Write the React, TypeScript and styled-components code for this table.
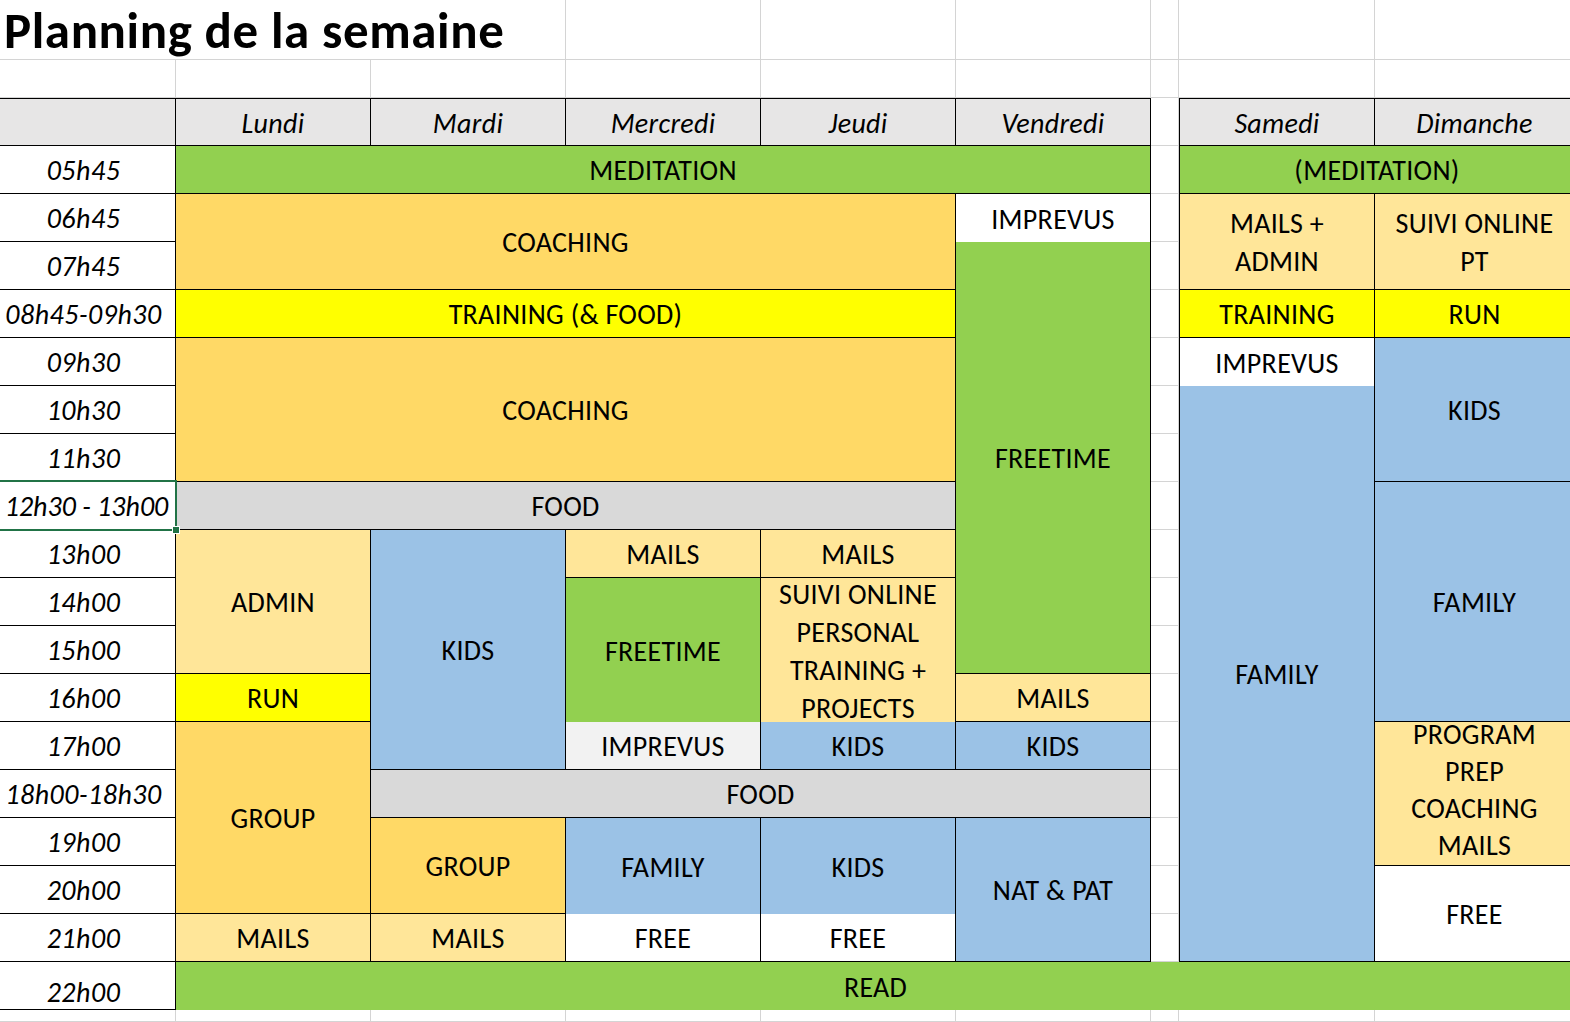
import React from 'react';
import styled, { createGlobalStyle, css } from 'styled-components';

const FONT = `Carlito, Calibri, Lato, "Liberation Sans", sans-serif`;

const Global = createGlobalStyle`
  html, body { margin: 0; padding: 0; background: #fff; overflow: hidden; }
  body { font-family: ${FONT}; color: #000; }
`;

const C = {
  green: '#92D050',
  gold: '#FFD966',
  light: '#FFE699',
  blue: '#9BC2E6',
  yellow: '#FFFF00',
  gray: '#D9D9D9',
  head: '#E7E6E6',
  pale: '#F2F2F2',
  white: '#FFFFFF',
};

const GRID = '#D4D4D4';

const Sheet = styled.div`
  display: grid;
  grid-template-columns: 176px repeat(5, 195px) 28px 196px 200px;
  grid-template-rows: 60px 38px 48px repeat(18, 48px) 12px;
  width: 1570px;
  height: 1022px;
  overflow: hidden;
  font-size: 28px;
  letter-spacing: 0.3px;
`;

const GridCell = styled.div<{ $r: number; $c: number }>`
  grid-row: ${(p) => p.$r};
  grid-column: ${(p) => p.$c};
  border-right: 1px solid ${GRID};
  border-bottom: 1px solid ${GRID};
  background: #fff;
`;

const Title = styled.h1`
  grid-row: 1;
  grid-column: 1 / span 3;
  margin: 0;
  padding: 0 0 0 4px;
  background: #fff;
  border-right: 1px solid ${GRID};
  border-bottom: 1px solid ${GRID};
  font-size: 51px;
  font-weight: 700;
  line-height: 62px;
  height: 60px;
  box-sizing: border-box;
  white-space: nowrap;
  letter-spacing: 0.6px;
  overflow: visible;
`;

const HeaderCell = styled.div<{ $c: number; $bl?: boolean }>`
  grid-row: 3;
  grid-column: ${(p) => p.$c};
  background: ${C.head};
  border-top: 1px solid #000;
  border-right: 1px solid #000;
  border-bottom: 1px solid #000;
  ${(p) => p.$bl && css`border-left: 1px solid #000;`}
  display: flex;
  align-items: center;
  justify-content: center;
  font-style: italic;
  padding-top: 3px;
  box-sizing: border-box;
`;

const TimeCell = styled.div<{ $r: number; $low?: boolean; $tight?: boolean }>`
  grid-row: ${(p) => p.$r};
  grid-column: 1;
  position: relative;
  background: #fff;
  border-right: 1px solid #000;
  border-bottom: 1px solid #000;
  display: flex;
  align-items: center;
  justify-content: center;
  font-style: italic;
  white-space: nowrap;
  letter-spacing: ${(p) => (p.$tight ? '0' : '0.5px')};
  box-sizing: border-box;
  padding-right: ${(p) => (p.$tight ? '2px' : '8px')};
  padding-top: ${(p) => (p.$low ? '14px' : '2px')};
`;

const Selection = styled.div`
  position: absolute;
  z-index: 5;
  top: -2px;
  left: -3px;
  right: -2px;
  bottom: -2px;
  border: 2px solid #217346;
  pointer-events: none;
`;

const Handle = styled.div`
  position: absolute;
  right: -5px;
  bottom: -5px;
  width: 6px;
  height: 6px;
  background: #217346;
  border: 1px solid #fff;
`;

const Block = styled.div<{
  $row: string;
  $col: string;
  $bg: string;
  $nb?: boolean;
  $nr?: boolean;
  $bl?: boolean;
  $lh?: number;
  $shift?: number;
}>`
  grid-row: ${(p) => p.$row};
  grid-column: ${(p) => p.$col};
  background: ${(p) => p.$bg};
  border-right: ${(p) => (p.$nr ? 'none' : '1px solid #000')};
  border-bottom: ${(p) => (p.$nb ? 'none' : '1px solid #000')};
  border-left: ${(p) => (p.$bl ? '1px solid #000' : 'none')};
  box-sizing: border-box;
  display: flex;
  flex-direction: column;
  align-items: center;
  justify-content: center;
  line-height: ${(p) => p.$lh ?? 30}px;
  padding-top: 3px;
  padding-bottom: ${(p) => p.$shift ?? 0}px;
  overflow: visible;
  text-align: center;
`;

const Line = styled.span`
  white-space: nowrap;
`;

type B = {
  r: number;
  rs?: number;
  c: number;
  cs?: number;
  bg: string;
  text?: string[];
  nb?: boolean;
  nr?: boolean;
  bl?: boolean;
  lh?: number;
  shift?: number;
};

const blocks: B[] = [
  { r: 0, c: 2, cs: 5, bg: C.green, text: ['MEDITATION'] },
  { r: 0, c: 8, cs: 2, bg: C.green, text: ['(MEDITATION)'], bl: true },
  { r: 1, rs: 2, c: 2, cs: 4, bg: C.gold, text: ['COACHING'] },
  { r: 1, c: 6, bg: C.white, text: ['IMPREVUS'], nb: true },
  { r: 2, rs: 9, c: 6, bg: C.green, text: ['FREETIME'] },
  { r: 3, c: 2, cs: 4, bg: C.yellow, text: ['TRAINING (& FOOD)'] },
  { r: 4, rs: 3, c: 2, cs: 4, bg: C.gold, text: ['COACHING'] },
  { r: 7, c: 2, cs: 4, bg: C.gray, text: ['FOOD'] },
  { r: 8, rs: 3, c: 2, bg: C.light, text: ['ADMIN'] },
  { r: 11, c: 2, bg: C.yellow, text: ['RUN'] },
  { r: 12, rs: 4, c: 2, bg: C.gold, text: ['GROUP'] },
  { r: 16, c: 2, bg: C.light, text: ['MAILS'] },
  { r: 8, rs: 5, c: 3, bg: C.blue, text: ['KIDS'] },
  { r: 8, c: 4, bg: C.light, text: ['MAILS'] },
  { r: 9, rs: 3, c: 4, bg: C.green, text: ['FREETIME'], nb: true },
  { r: 12, c: 4, bg: C.pale, text: ['IMPREVUS'] },
  { r: 8, c: 5, bg: C.light, text: ['MAILS'] },
  {
    r: 9,
    rs: 3,
    c: 5,
    bg: C.light,
    text: ['SUIVI ONLINE', 'PERSONAL', 'TRAINING +', 'PROJECTS'],
    nb: true,
    lh: 38,
  },
  { r: 12, c: 5, bg: C.blue, text: ['KIDS'] },
  { r: 11, c: 6, bg: C.light, text: ['MAILS'] },
  { r: 12, c: 6, bg: C.blue, text: ['KIDS'] },
  { r: 13, c: 3, cs: 4, bg: C.gray, text: ['FOOD'] },
  { r: 14, rs: 2, c: 3, bg: C.gold, text: ['GROUP'] },
  { r: 16, c: 3, bg: C.light, text: ['MAILS'] },
  { r: 14, rs: 2, c: 4, bg: C.blue, text: ['FAMILY'], nb: true },
  { r: 16, c: 4, bg: C.white, text: ['FREE'] },
  { r: 14, rs: 2, c: 5, bg: C.blue, text: ['KIDS'], nb: true },
  { r: 16, c: 5, bg: C.white, text: ['FREE'] },
  { r: 14, rs: 3, c: 6, bg: C.blue, text: ['NAT & PAT'] },
  { r: 17, c: 2, cs: 8, bg: C.green, text: ['READ'], nb: true, nr: true },
  { r: 1, rs: 2, c: 8, bg: C.light, text: ['MAILS +', 'ADMIN'], bl: true, lh: 38 },
  { r: 3, c: 8, bg: C.yellow, text: ['TRAINING'], bl: true },
  { r: 4, c: 8, bg: C.white, text: ['IMPREVUS'], bl: true, nb: true },
  { r: 5, rs: 12, c: 8, bg: C.blue, text: ['FAMILY'], bl: true },
  { r: 1, rs: 2, c: 9, bg: C.light, text: ['SUIVI ONLINE', 'PT'], lh: 38 },
  { r: 3, c: 9, bg: C.yellow, text: ['RUN'] },
  { r: 4, rs: 3, c: 9, bg: C.blue, text: ['KIDS'] },
  { r: 7, rs: 5, c: 9, bg: C.blue, text: ['FAMILY'] },
  {
    r: 12,
    rs: 3,
    c: 9,
    bg: C.light,
    text: ['PROGRAM', 'PREP', 'COACHING', 'MAILS'],
    lh: 37,
    shift: 10,
  },
  { r: 15, rs: 2, c: 9, bg: C.white, text: ['FREE'] },
];

const times = [
  '05h45',
  '06h45',
  '07h45',
  '08h45-09h30',
  '09h30',
  '10h30',
  '11h30',
  '12h30 - 13h00',
  '13h00',
  '14h00',
  '15h00',
  '16h00',
  '17h00',
  '18h00-18h30',
  '19h00',
  '20h00',
  '21h00',
  '22h00',
];

const days: { label: string; c: number; bl?: boolean }[] = [
  { label: 'Lundi', c: 2 },
  { label: 'Mardi', c: 3 },
  { label: 'Mercredi', c: 4 },
  { label: 'Jeudi', c: 5 },
  { label: 'Vendredi', c: 6 },
  { label: 'Samedi', c: 8, bl: true },
  { label: 'Dimanche', c: 9 },
];

const TOTAL_ROWS = 22;
const TOTAL_COLS = 9;

export default function App() {
  const gridCells: React.ReactNode[] = [];
  for (let r = 1; r <= TOTAL_ROWS; r++) {
    for (let c = 1; c <= TOTAL_COLS; c++) {
      gridCells.push(<GridCell key={`g${r}-${c}`} $r={r} $c={c} />);
    }
  }
  return (
    <>
      <Global />
      <Sheet>
        {gridCells}
        <Title>Planning de la semaine</Title>
        <HeaderCell $c={1} />
        {days.map((d) => (
          <HeaderCell key={d.label} $c={d.c} $bl={d.bl}>
            {d.label}
          </HeaderCell>
        ))}
        {times.map((t, i) => (
          <TimeCell
            key={t}
            $r={4 + i}
            $low={i === times.length - 1}
            $tight={i === 7}
          >
            {t}
            {i === 7 && (
              <Selection>
                <Handle />
              </Selection>
            )}
          </TimeCell>
        ))}
        {blocks.map((b, i) => (
          <Block
            key={i}
            $row={`${4 + b.r} / span ${b.rs ?? 1}`}
            $col={`${b.c} / span ${b.cs ?? 1}`}
            $bg={b.bg}
            $nb={b.nb}
            $nr={b.nr}
            $bl={b.bl}
            $lh={b.lh}
            $shift={b.shift}
          >
            {b.text?.map((l) => (
              <Line key={l}>{l}</Line>
            ))}
          </Block>
        ))}
      </Sheet>
    </>
  );
}
